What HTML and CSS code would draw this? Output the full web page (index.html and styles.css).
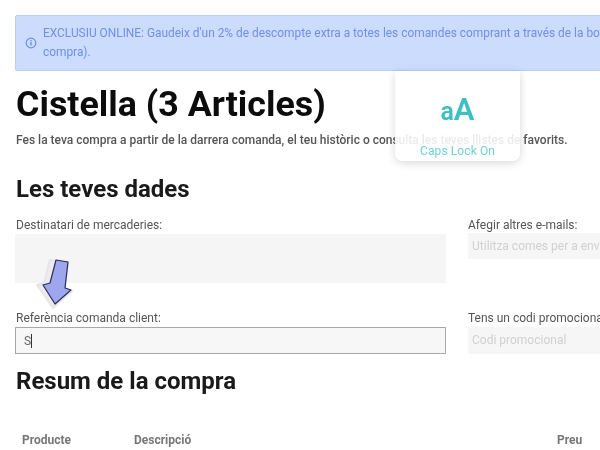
FILE: index.html
```html
<!DOCTYPE html>
<html lang="ca">
<head>
<meta charset="utf-8">
<title>Cistella</title>
<link rel="stylesheet" href="styles.css">
</head>
<body>
<main class="page">
  <div class="alert">
    <svg class="alert-icon" width="12" height="12" viewBox="0 0 12 12"><circle cx="6" cy="6" r="4.8" fill="none" stroke="#6f90e8" stroke-width="1.2"/><rect x="5.3" y="5" width="1.4" height="3.6" fill="#6f90e8"/><rect x="5.3" y="3" width="1.4" height="1.3" fill="#6f90e8"/></svg>
    <p class="alert-text">EXCLUSIU ONLINE: Gaudeix d'un 2% de descompte extra a totes les comandes comprant a través de la botiga online en la compra).</p>
  </div>
  <h1 class="title">Cistella (3 Articles)</h1>
  <p class="intro">Fes la teva compra a partir de la darrera comanda, el teu històric o consulta les teves llistes de favorits.</p>
  <h2 class="section section-data">Les teves dades</h2>
  <div class="form-row form-row-top">
    <div class="col-left">
      <label class="label">Destinatari de mercaderies:</label>
      <div class="address"></div>
    </div>
    <div class="col-right">
      <label class="label">Afegir altres e-mails:</label>
      <div class="ghost-input ghost-top">Utilitza comes per a enviar</div>
    </div>
  </div>
  <div class="form-row form-row-bottom">
    <div class="col-left">
      <label class="label">Referència comanda client:</label>
      <div class="text-input">S<span class="caret"></span></div>
    </div>
    <div class="col-right">
      <label class="label">Tens un codi promocional?</label>
      <div class="ghost-input ghost-bottom">Codi promocional</div>
    </div>
  </div>
  <h2 class="section section-summary">Resum de la compra</h2>
  <div class="table-head">
    <span class="th th-product">Producte</span>
    <span class="th th-desc">Descripció</span>
    <span class="th th-price">Preu</span>
  </div>
</main>
<div class="caps">
  <div class="caps-glyph"><span class="caps-a">a</span><span class="caps-b">A</span></div>
  <div class="caps-label">Caps Lock On</div>
</div>
<svg class="arrow" width="48" height="56" viewBox="0 0 48 56">
  <path d="M15 2 L33 4 L30 30 L37 33 L18 50 L2 27 L9 25 Z" fill="#ececf0" stroke="#e6e6ea" stroke-width="2" stroke-linejoin="round"/>
  <path d="M21 2 L33 4 L30 30 L36 32 L20 46 L8 27 L15 25 Z" fill="#9ea6ee" stroke="#2c2c5c" stroke-width="1.2" stroke-linejoin="round"/>
</svg>
</body>
</html>
```
FILE: styles.css
```css
html, body {
  margin: 0;
  height: 100%;
  background: #fff;
  overflow: hidden;
}
body {
  font-family: Roboto, "Liberation Sans", sans-serif;
  position: relative;
}
.page {
  width: 700px;
  padding: 15px 0 0 15px;
  filter: blur(0.45px);
}
.alert {
  display: flex;
  align-items: center;
  gap: 6px;
  box-sizing: border-box;
  height: 56px;
  padding: 0 6px 0 9px;
  background: #ccdcfd;
  border: 1px solid #b9cdf6;
  border-radius: 2px;
}
.alert-icon { flex: none; }
.alert-text {
  margin: 0;
  width: 640px;
  font-size: 11.9px;
  line-height: 19px;
  color: #6f90e8;
}
.title {
  margin: 12px 0 0 1px;
  font-size: 35.8px;
  line-height: 42px;
  font-weight: 700;
  color: #0c0c0c;
}
.intro {
  margin: 7px 0 0 1px;
  font-size: 12px;
  line-height: 16px;
  font-weight: 500;
  color: #555;
  white-space: nowrap;
}
.section {
  margin: 0 0 0 1px;
  font-size: 24px;
  line-height: 26px;
  font-weight: 700;
  color: #1a1a1a;
}
.section-data { margin-top: 28px; }
.form-row {
  display: flex;
  gap: 22px;
}
.form-row-top { margin-top: 16px; height: 85px; }
.form-row-bottom { margin-top: 8px; }
.col-left { width: 431px; flex: none; }
.col-right { width: 230px; flex: none; }
.label {
  display: block;
  margin-left: 1px;
  font-size: 12px;
  line-height: 14px;
  color: #555;
  white-space: nowrap;
}
.col-right .label { margin-left: 0; }
.address {
  height: 49px;
  margin-top: 2px;
  background: #f5f5f5;
}
.ghost-input {
  box-sizing: border-box;
  padding-left: 4px;
  background: #f6f6f6;
  font-size: 12px;
  color: #d0d0d0;
  white-space: nowrap;
}
.ghost-top {
  height: 26px;
  margin-top: 1px;
  line-height: 26px;
}
.ghost-bottom {
  height: 27px;
  margin-top: 2px;
  line-height: 27px;
}
.text-input {
  box-sizing: border-box;
  display: flex;
  align-items: center;
  height: 27px;
  margin-top: 2px;
  padding-left: 8px;
  background: #f7f7f7;
  border: 1px solid #a8a8a8;
  font-size: 12px;
  color: #666;
}
.caret {
  width: 1px;
  height: 14px;
  background: #333;
}
.section-summary { margin-top: 14px; }
.table-head {
  display: flex;
  margin-top: 39px;
  padding-left: 7px;
}
.th {
  font-size: 12px;
  line-height: 14px;
  font-weight: 700;
  color: #777;
}
.th-product { width: 112px; }
.th-desc { width: 423px; }
.caps {
  position: absolute;
  left: 395px;
  top: 71px;
  box-sizing: border-box;
  width: 125px;
  height: 90px;
  background: rgba(255, 255, 255, 0.88);
  border-radius: 0 0 8px 8px;
  box-shadow: 0 2px 8px rgba(0, 0, 0, 0.16);
  text-align: center;
  filter: blur(0.4px);
}
.caps-glyph {
  margin-top: 23px;
  line-height: 32px;
  color: #3dbfc4;
  font-weight: 600;
}
.caps-a { font-size: 25px; }
.caps-b { font-size: 31px; }
.caps-label {
  margin-top: 13px;
  font-size: 12px;
  line-height: 14px;
  letter-spacing: 0.1px;
  color: #72d0d4;
}
.arrow {
  position: absolute;
  left: 35px;
  top: 258px;
  filter: blur(0.4px);
}
```
